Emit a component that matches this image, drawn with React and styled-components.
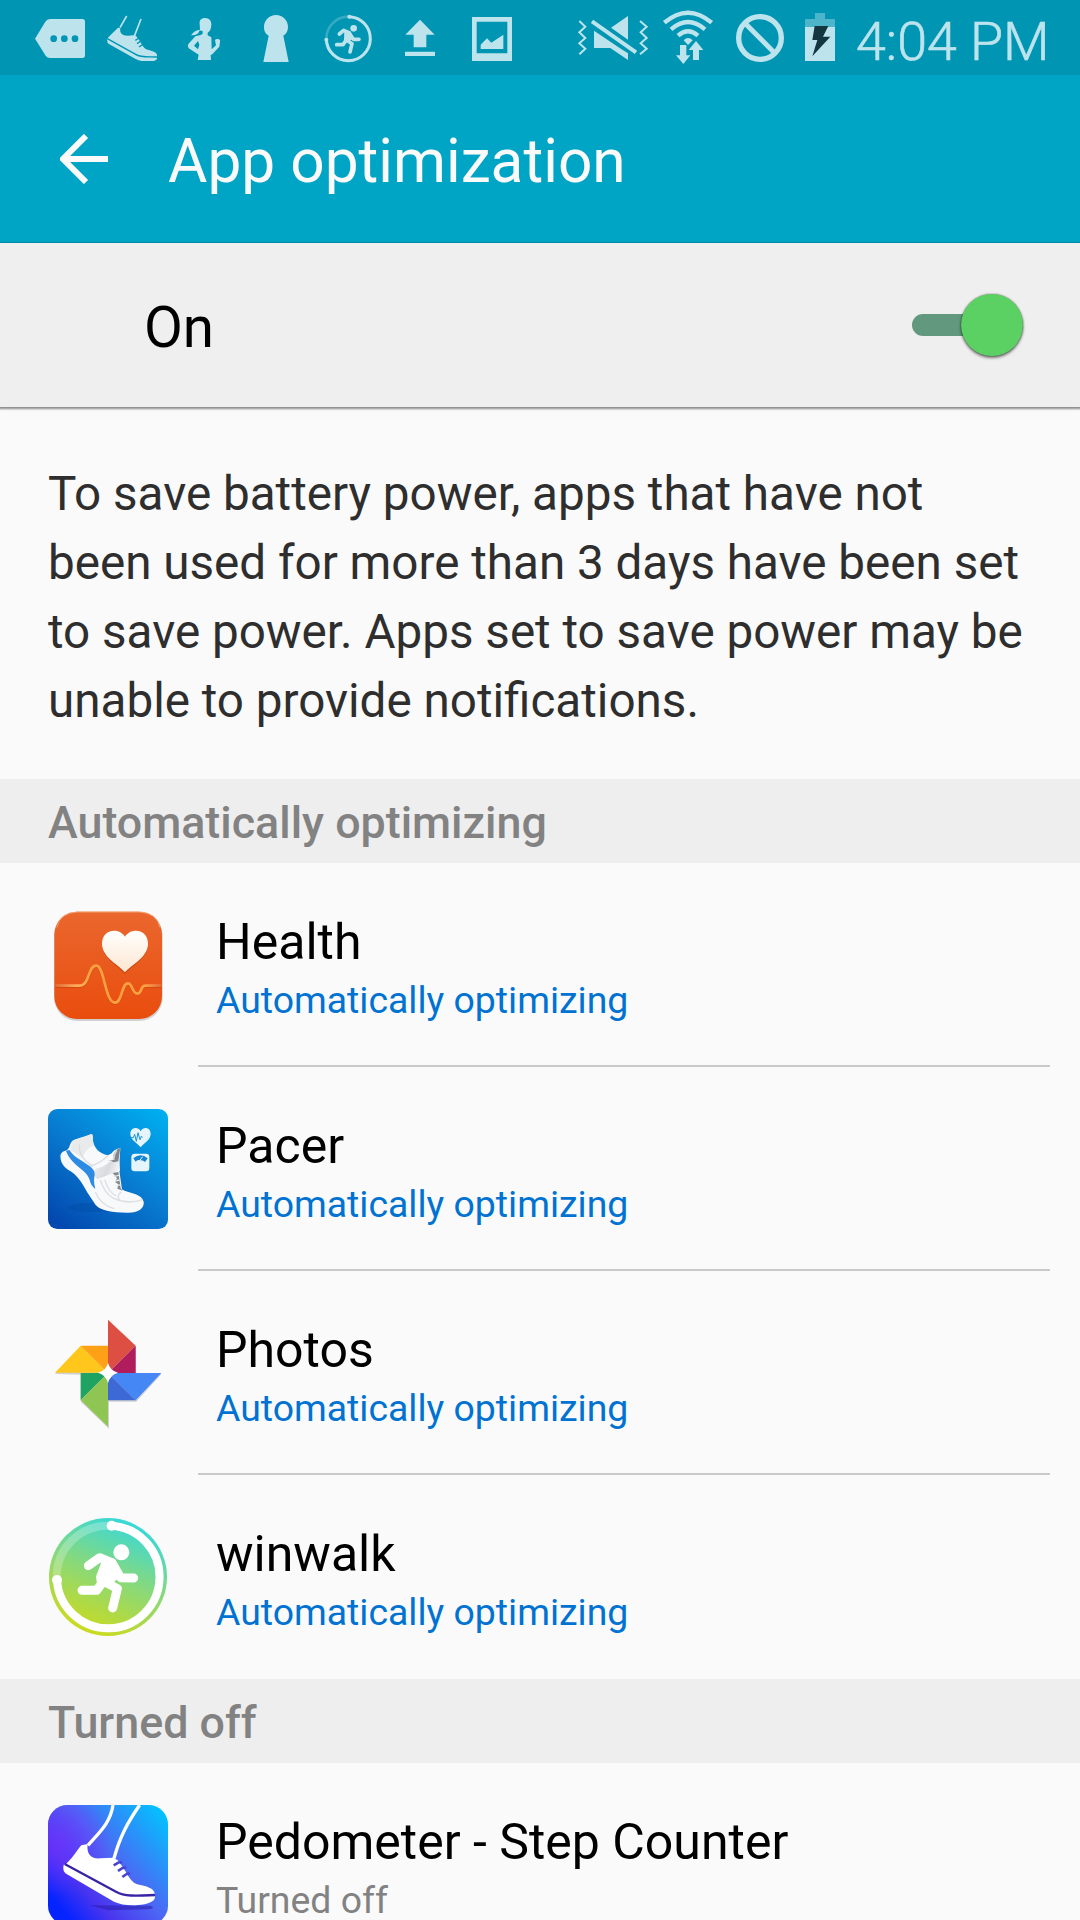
import React from "react";
import styled, { createGlobalStyle } from "styled-components";

const GlobalStyle = createGlobalStyle`
  html, body { margin: 0; padding: 0; background: #fafafa; }
  body { overflow: hidden; }
  * { box-sizing: border-box; }
`;

const Screen = styled.div`
  width: 1080px;
  height: 1920px;
  overflow: hidden;
  display: flex;
  flex-direction: column;
  background: #fafafa;
  color: #000;
  font-family: Roboto, "Liberation Sans", sans-serif;
`;

const StatusBar = styled.div`
  flex: none;
  height: 75px;
  display: flex;
  justify-content: space-between;
  padding: 0 32px 0 24px;
  background: #0095b3;
  color: #bde4ec;
`;

const StatusGroup = styled.div`
  display: flex;
  align-items: flex-start;
`;

const StatusIcon = styled.svg`
  display: block;
  flex: none;
  width: ${(p) => p.$w || 72}px;
  height: 75px;
  fill: #bde4ec;
`;

const Clock = styled.span`
  width: 192px;
  margin-left: 12px;
  font-size: 53.8px;
  font-weight: 300;
  -webkit-text-stroke: 0.6px #bde4ec;
  line-height: 84px;
  white-space: nowrap;
`;

const AppBar = styled.header`
  flex: none;
  height: 168px;
  display: flex;
  align-items: center;
  gap: 60px;
  padding: 0 60px;
  background: #00a5c5;
`;

const BackArrow = styled.svg`
  width: 48px;
  height: 50px;
  flex: none;
`;

const Title = styled.h1`
  margin: 0;
  padding-top: 6px;
  font-size: 60.4px;
  font-weight: 400;
  line-height: 72px;
  color: #fafafa;
`;

const MasterRow = styled.div`
  position: relative;
  flex: none;
  height: 164px;
  display: flex;
  align-items: center;
  justify-content: space-between;
  padding: 0 57px 0 144px;
  background: #efefef;
  box-shadow: 0 1px 2px 1px rgba(0, 0, 0, 0.45);
`;

const MasterLabel = styled.span`
  padding-top: 5px;
  font-size: 56.5px;
  line-height: 66px;
`;

const Track = styled.span`
  width: 111px;
  height: 22px;
  display: flex;
  align-items: center;
  justify-content: flex-end;
  border-radius: 11px;
  background: #62987e;
`;

const Thumb = styled.span`
  flex: none;
  width: 62px;
  height: 62px;
  border-radius: 50%;
  background: #5cd163;
  box-shadow: 0 2px 3px rgba(0, 0, 0, 0.5), 0 0 2px rgba(0, 0, 0, 0.5);
`;

const Description = styled.p`
  flex: none;
  height: 372px;
  margin: 0;
  padding: 53px 0 0 48px;
  font-size: 47.6px;
  line-height: 69px;
  white-space: nowrap;
  color: #2e2e2e;
`;

const SectionHeader = styled.h2`
  flex: none;
  height: 84px;
  margin: 0;
  padding: 2px 48px 0;
  font-size: 44.8px;
  font-weight: 500;
  line-height: 84px;
  color: #828282;
  background: #eee;
`;

const List = styled.ul`
  flex: none;
  margin: 0;
  padding: 0;
  list-style: none;
`;

const Item = styled.li`
  height: 204px;
  display: flex;
  padding: 0 30px 0 38px;
`;

const AppIcon = styled.svg`
  flex: none;
  width: 140px;
  height: 140px;
  margin-top: 32px;
  overflow: visible;
`;

const ItemBody = styled.div`
  flex: 1;
  margin-left: 20px;
  padding: 48px 0 0 18px;
  border-bottom: 2px solid ${(p) => (p.$last ? "transparent" : "#c9c9c9")};
`;

const ItemTitle = styled.div`
  font-size: 50px;
  line-height: 62px;
  white-space: nowrap;
`;

const ItemStatus = styled.div`
  margin-top: 4px;
  font-size: 37.4px;
  line-height: 47px;
  color: ${(p) => (p.$off ? "#828282" : "#0072d2")};
`;

const C = "#bde4ec";
const BG = "#0095b3";

function HealthIcon() {
  return (
    <AppIcon viewBox="-6 -15 420 420">
      <defs>
        <linearGradient id="hBg" x1="0" y1="0" x2="0" y2="1">
          <stop offset="0" stopColor="#ea672e" />
          <stop offset="1" stopColor="#e94d0d" />
        </linearGradient>
        <linearGradient id="hHeart" x1="0" y1="0" x2="0" y2="1">
          <stop offset="0" stopColor="#fff" />
          <stop offset="1" stopColor="#fde6cf" />
        </linearGradient>
        <linearGradient id="hLine" gradientUnits="userSpaceOnUse" x1="46" y1="0" x2="364" y2="0">
          <stop offset="0" stopColor="#f9b080" stopOpacity="0.3" />
          <stop offset="0.2" stopColor="#fcae5c" />
          <stop offset="0.35" stopColor="#fba040" />
          <stop offset="0.85" stopColor="#fba040" />
          <stop offset="1" stopColor="#f9b080" stopOpacity="0.3" />
        </linearGradient>
      </defs>
      <rect x="42" y="38" width="326" height="325" rx="70" fill="#000" opacity="0.16" />
      <rect x="43" y="35" width="323" height="322" rx="68" fill="url(#hBg)" />
      <path d="M50 82Q60 38 112 36H298Q350 38 360 82" fill="none" stroke="#f5a273" strokeWidth="3" />
      <path d="M46 260H118C151 260 142 199 169 199C194 199 194 310 225 310C247 310 244 252 264 252C278 252 276 283 292 283C307 283 300 260 316 260H364" fill="none" stroke="#c43f08" strokeWidth="8" opacity="0.6" />
      <path d="M46 257H118C151 257 142 197 169 197C194 197 194 308 225 308C247 308 244 250 264 250C278 250 276 281 292 281C307 281 300 257 316 257H364" fill="none" stroke="url(#hLine)" strokeWidth="8" />
      <path d="M255 222C242 204 186 175 186 136C186 89 239 86 255 114C271 86 324 89 324 136C324 175 268 204 255 222Z" fill="#9f3005" opacity="0.45" />
      <path d="M255 217C242 199 186 173 186 132C186 85 239 82 255 110C271 82 324 85 324 132C324 173 268 199 255 217Z" fill="url(#hHeart)" />
    </AppIcon>
  );
}

function PacerIcon() {
  return (
    <AppIcon viewBox="-6 -3 420 420">
      <defs>
        <linearGradient id="pBg" x1="0.9" y1="0" x2="0.15" y2="1">
          <stop offset="0" stopColor="#00adef" />
          <stop offset="0.5" stopColor="#087bd0" />
          <stop offset="1" stopColor="#0349af" />
        </linearGradient>
        <linearGradient id="pShade" x1="0" y1="0" x2="1" y2="0.3">
          <stop offset="0" stopColor="#eee" />
          <stop offset="0.6" stopColor="#d8dadd" />
          <stop offset="1" stopColor="#f4f4f4" />
        </linearGradient>
      </defs>
      <rect x="24" y="27" width="360" height="360" rx="28" fill="url(#pBg)" />
      <ellipse cx="170" cy="322" rx="85" ry="14" fill="#0349a0" opacity="0.35" />
      <path d="M62 163Q66 154 80 151C91 143 88 130 98 122C115 112 140 112 154 102Q160 104 158 118C162 145 177 161 204 166L215 160Q224 147 241 144L239 178L238 212L246 268C265 281 303 279 311 305C314 325 294 339 261 338C216 337 185 334 167 315L143 279C125 244 109 222 84 209C65 197 59 177 62 163Z" fill="#f8f9fa" />
      <path d="M98 122Q125 112 154 102Q160 104 158 118L161 137C145 141 134 157 127 173L89 150Z" fill="#e9eaec" />
      <path d="M119 133Q112 168 158 199M151 198Q185 188 204 166" fill="none" stroke="#dadcdf" strokeWidth="4" />
      <path d="M78 152L88 150C112 185 155 190 166 220Q158 238 166 267Q153 258 149 240C142 209 94 198 78 152Z" fill="#2e8be3" />
      <path d="M167 206Q194 201 211 184L237 181L240 212L172 237Q158 224 167 206Z" fill="url(#pShade)" />
      <path d="M202 183L219 180L221 162Q228 147 241 144L235 184L221 187L213 182Z" fill="#83878c" />
      <path d="M230 151Q220 165 221 180" fill="none" stroke="#d2d4d7" strokeWidth="5" />
      <path d="M218 219L235 216L242 265L248 272L232 266L235 253L225 246L231 235Z" fill="#85898e" />
      <path d="M221 229L237 226M225 243L239 240M230 257L243 254" stroke="#e6e7e9" strokeWidth="4" />
      <path d="M181 240Q195 283 221 295Q265 315 307 299M166 276Q180 314 223 326M194 239Q206 278 229 288M244 275Q224 293 245 304" fill="none" stroke="#dddfe2" strokeWidth="4" />
      <path d="M302 142C292 130 271 119 271 102C271 82 294 78 302 94C310 78 332 82 332 102C332 119 312 130 302 142Z" fill="#e6f4fb" />
      <path d="M271 113H280L284 103L289 124L294 98L300 119L304 109L308 112" fill="none" stroke="#1593db" strokeWidth="3" />
      <rect x="274" y="161" width="54" height="53" rx="10" fill="#e6f4fb" />
      <path d="M280 175Q302 157 323 175L315 186Q309 179 300 181Q292 178 287 185Z" fill="#1583cf" />
      <path d="M298 183L308 170" stroke="#e6f4fb" strokeWidth="3" />
    </AppIcon>
  );
}

function PhotosIcon() {
  return (
    <AppIcon viewBox="-6 -21 420 420">
      <path d="M45 192L124 111H206V36L287 113V193H364L289 275H207V356L122 275V194Z" fill="#000" opacity="0.16" />
      <path d="M45 188L122 107L204 188Z" fill="#ffc61b" />
      <path d="M122 107H204V188Z" fill="#ffa116" />
      <path d="M204 29L287 107L204 188Z" fill="#dd4f42" />
      <path d="M287 107V189H204Z" fill="#b01c5c" />
      <path d="M204 189H364L287 271Z" fill="#4487f5" />
      <path d="M204 189L287 271H204Z" fill="#3c69d6" />
      <path d="M122 189H204L122 270Z" fill="#1fa362" />
      <path d="M204 189V350L122 270Z" fill="#8fc653" />
      <path d="M204 158Q210 182 234 188Q210 194 204 220Q198 194 174 188Q198 182 204 158Z" fill="#fff" />
    </AppIcon>
  );
}

function WinwalkIcon() {
  return (
    <AppIcon viewBox="-6 -9 420 420">
      <defs>
        <linearGradient id="wBg" x1="0.72" y1="0.03" x2="0.35" y2="0.95">
          <stop offset="0" stopColor="#36d8dc" />
          <stop offset="0.5" stopColor="#87d97c" />
          <stop offset="1" stopColor="#c9da22" />
        </linearGradient>
      </defs>
      <circle cx="204" cy="201" r="177" fill="url(#wBg)" />
      <circle cx="204" cy="201" r="154" fill="none" stroke="#fff" strokeWidth="24" opacity="0.25" />
      <path d="M215 47A154 154 0 1 1 51 210" fill="none" stroke="#fff" strokeWidth="24" strokeLinecap="round" />
      <circle cx="215" cy="47" r="15" fill="#fff" />
      <circle cx="51" cy="210" r="15" fill="#fff" />
      <circle cx="244" cy="127" r="24" fill="#fff" />
      <path d="M145 167L179 143L215 158M215 166L242 203L281 204M200 200L170 241H126M190 213L232 236L218 294" fill="none" stroke="#fff" strokeWidth="27" strokeLinecap="round" strokeLinejoin="round" />
      <path d="M192 147L222 150L244 188L216 217L174 214L172 200Z" fill="#fff" stroke="#fff" strokeLinejoin="round" strokeWidth="8" />
    </AppIcon>
  );
}

function PedometerIcon() {
  return (
    <AppIcon viewBox="-6 0 420 420">
      <defs>
        <linearGradient id="sBg" x1="1" y1="0.08" x2="0.1" y2="0.85">
          <stop offset="0" stopColor="#00c4ff" />
          <stop offset="0.5" stopColor="#4d66f4" />
          <stop offset="0.78" stopColor="#4a35ef" />
          <stop offset="1" stopColor="#0624ff" />
        </linearGradient>
        <radialGradient id="sGlow" cx="0.08" cy="0.32" r="0.45">
          <stop offset="0" stopColor="#7330ff" stopOpacity="0.7" />
          <stop offset="1" stopColor="#7330ff" stopOpacity="0" />
        </radialGradient>
      </defs>
      <rect x="24" y="30" width="360" height="360" rx="58" fill="url(#sBg)" />
      <rect x="24" y="30" width="360" height="360" rx="58" fill="url(#sGlow)" />
      <path d="M150 331L330 332Q350 339 325 343L205 346Z" fill="#2518a0" opacity="0.5" />
      <path d="M219 30C210 86 179 111 144 151M299 30C265 80 241 120 222 190" fill="none" stroke="#fff" strokeWidth="10" />
      <path d="M79 206C101 186 112 164 124 151L143 147C139 176 151 192 181 190L221 188L233 196C262 230 265 257 291 268C320 274 342 279 345 298V306C345 320 321 329 294 330C265 332 242 329 222 320L81 238Q66 229 71 209Z" fill="#fff" />
      <path d="M74 207L228 290C257 306 296 302 345 300" fill="none" stroke="#3822a6" strokeWidth="7" />
      <path d="M221 211L235 203Q241 200 245 204M234 228L248 219Q254 216 258 220M247 246L260 237Q265 234 269 238" fill="none" stroke="#4a42d2" strokeWidth="8" />
    </AppIcon>
  );
}

const OPTIMIZING = [
  { name: "Health", Icon: HealthIcon },
  { name: "Pacer", Icon: PacerIcon },
  { name: "Photos", Icon: PhotosIcon },
  { name: "winwalk", Icon: WinwalkIcon },
];

const TURNED_OFF = [{ name: "Pedometer - Step Counter", Icon: PedometerIcon }];

function AppList({ apps, status, off }) {
  return (
    <List>
      {apps.map(({ name, Icon }, i) => (
        <Item key={name}>
          <Icon />
          <ItemBody $last={i === apps.length - 1}>
            <ItemTitle>{name}</ItemTitle>
            <ItemStatus $off={off}>{status}</ItemStatus>
          </ItemBody>
        </Item>
      ))}
    </List>
  );
}

function NotificationIcons() {
  return (
    <StatusGroup>
      <StatusIcon viewBox="12 0 216 225">
        <path d="M45 116L76 65Q81 57 90 57H187Q195 57 195 65V166Q195 174 187 174H90Q82 174 77 167Z" />
        <g fill={BG}>
          <circle cx="101" cy="116" r="10" />
          <circle cx="133" cy="116" r="10" />
          <circle cx="165" cy="116" r="10" />
        </g>
      </StatusIcon>
      <StatusIcon viewBox="228 0 216 225">
        <path d="M320 48L300 83M363 57L344 106" stroke={C} strokeWidth="5" fill="none" />
        <path d="M265 112L294 83L301 85C298 101 308 108 325 107L345 105C361 120 365 138 377 147C393 153 411 155 411 166V176Q408 183 395 183H365Q355 181 347 177L268 133Q261 129 261 119Z" />
        <path d="M262 116L347 163C361 173 382 170 411 171" stroke={BG} strokeWidth="4" fill="none" />
        <path d="M346 121L357 114M351 131L363 123M357 141L369 133" stroke={BG} strokeWidth="4" />
      </StatusIcon>
      <StatusIcon viewBox="444 0 216 225">
        <path d="M539 72C537 60 545 54 555 54C568 54 575 63 574 75C573 88 570 94 563 98L563 106L574 112L575 148L588 136L585 121Q586 116 594 117Q602 118 600 126L598 140L577 163L572 165L573 180H533L536 164L506 145Q501 139 505 132L526 109L542 105L548 101V94L539 91Q536 107 513 106Q524 90 540 89ZM534 123L522 137L534 148L538 134Z" fillRule="evenodd" />
      </StatusIcon>
      <StatusIcon viewBox="660 0 216 225">
        <path d="M746 107C735 101 732 91 732 81C732 60 748 45 768 45C788 45 804 60 804 81C804 92 800 101 790 107L806 186H730Z" />
      </StatusIcon>
      <StatusIcon viewBox="66 0 216 225">
        <circle cx="175" cy="116" r="66" fill="none" stroke={C} strokeWidth="8" opacity="0.28" />
        <path d="M178 50A66 66 0 1 1 109 119" fill="none" stroke={C} strokeWidth="9" />
        <circle cx="178" cy="50" r="6" />
        <circle cx="109" cy="119" r="6" />
        <circle cx="191" cy="85" r="10" />
        <path d="M148 102L161 91L177 98L190 118H207M177 101L168 121L159 134H140M169 120L186 131L180 156" fill="none" stroke={C} strokeWidth="11" strokeLinecap="round" strokeLinejoin="round" />
        <path d="M163 93L181 94L191 114L178 124L162 120Z" />
      </StatusIcon>
      <StatusIcon viewBox="282 0 216 225">
        <path d="M390 59L434 104H409V142H371V104H346ZM345 155H435V168H345Z" />
      </StatusIcon>
      <StatusIcon viewBox="498 0 216 225">
        <path fillRule="evenodd" d="M546 51H666V183H546ZM560 65V160H652V65ZM572 147V134L591 115L604 128L640 104V147Z" />
      </StatusIcon>
    </StatusGroup>
  );
}

function SystemIcons() {
  return (
    <StatusGroup>
      <StatusIcon $w={80} viewBox="36 0 240 225">
        <path d="M58 63L76 80L58 97L76 114L58 130L76 146L58 163M240 63L260 80L242 97L260 114L242 130L260 146L240 163" fill="none" stroke={C} strokeWidth="6" />
        <path d="M102 92L179 144L204 160V180L151 144H102ZM204 48V119L153 83Z" />
        <path d="M96 64L228 157" stroke={C} strokeWidth="12" fill="none" />
      </StatusIcon>
      <StatusIcon viewBox="276 0 216 225">
        <path d="M313 68Q384 8 455 68M333 88Q384 44 435 88M354 107Q384 81 414 107" fill="none" stroke={C} strokeWidth="13" />
        <path d="M371 121Q384 107 398 121L384 135Z" />
        <path d="M360 135H379V166H391L370 192L348 166H360ZM408 123L430 150H417V180H399V150H386Z" />
      </StatusIcon>
      <StatusIcon viewBox="492 0 216 225">
        <circle cx="600" cy="114" r="64" fill="none" stroke={C} strokeWidth="16" />
        <path d="M555 70L644 159" stroke={C} strokeWidth="15" />
      </StatusIcon>
      <StatusIcon $w={48} viewBox="18 0 144 225">
        <path d="M75 39H105V57H135V81H45V57H75Z" fill="#4eb4ca" />
        <path d="M45 81H135V183H45Z" />
        <path d="M74 78H115L99 110H121L67 169L82 120H67Z" fill="#13363f" />
      </StatusIcon>
      <Clock>4:04 PM</Clock>
    </StatusGroup>
  );
}

export default function App() {
  return (
    <>
      <GlobalStyle />
      <Screen>
        <StatusBar>
          <NotificationIcons />
          <SystemIcons />
        </StatusBar>
        <AppBar>
          <BackArrow viewBox="0 0 48 50">
            <path d="M26 2L3 25L26 48M3 25H48" fill="none" stroke="#fafafa" strokeWidth="6" />
          </BackArrow>
          <Title>App optimization</Title>
        </AppBar>
        <MasterRow>
          <MasterLabel>On</MasterLabel>
          <Track>
            <Thumb />
          </Track>
        </MasterRow>
        <Description>
          To save battery power, apps that have not
          <br />
          been used for more than 3 days have been set
          <br />
          to save power. Apps set to save power may be
          <br />
          unable to provide notifications.
        </Description>
        <SectionHeader>Automatically optimizing</SectionHeader>
        <AppList apps={OPTIMIZING} status="Automatically optimizing" />
        <SectionHeader>Turned off</SectionHeader>
        <AppList apps={TURNED_OFF} status="Turned off" off />
      </Screen>
    </>
  );
}
